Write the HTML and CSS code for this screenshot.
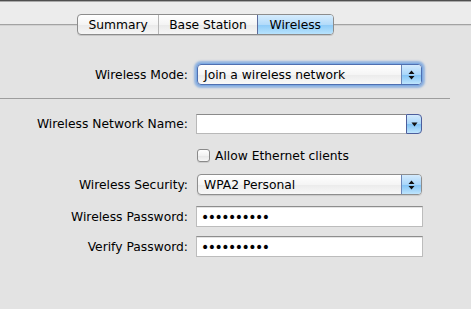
FILE: index.html
```html
<!DOCTYPE html>
<html lang="en">
<head>
    <meta charset="UTF-8">
    <title>Wireless</title>
    <link rel="stylesheet" href="styles.css">
</head>
<body>
    <div class="topbar"></div>
    <div class="pane">
        <div class="tabs">
            <span class="tab">Summary</span>
            <span class="tab">Base Station</span>
            <span class="tab active">Wireless</span>
        </div>

        <div class="row mode-row">
            <label>Wireless Mode:</label>
            <div class="popup focused">
                <span class="popup-text">Join a wireless network</span>
                <span class="cap">
                    <svg width="7" height="10" viewBox="0 0 7 10"><path d="M3.5 0.5 L6.5 4 L0.5 4 Z M0.5 6 L6.5 6 L3.5 9.5 Z" fill="#111"/></svg>
                </span>
            </div>
        </div>

        <div class="sep"></div>

        <div class="row name-row">
            <label for="net-name">Wireless Network Name:</label>
            <div class="combo">
                <input type="text" id="net-name" class="combo-input">
                <span class="combo-btn">
                    <svg width="7" height="5" viewBox="0 0 7 5"><path d="M0.5 0.5 L6.5 0.5 L3.5 4.5 Z" fill="#111"/></svg>
                </span>
            </div>
        </div>

        <div class="row check-row">
            <span></span>
            <label class="check"><span class="box"></span>Allow Ethernet clients</label>
        </div>

        <div class="row sec-row">
            <label>Wireless Security:</label>
            <div class="popup">
                <span class="popup-text">WPA2 Personal</span>
                <span class="cap">
                    <svg width="7" height="10" viewBox="0 0 7 10"><path d="M3.5 0.5 L6.5 4 L0.5 4 Z M0.5 6 L6.5 6 L3.5 9.5 Z" fill="#111"/></svg>
                </span>
            </div>
        </div>

        <div class="row pass-row">
            <label>Wireless Password:</label>
            <div class="field"><span class="dots">••••••••••</span></div>
        </div>

        <div class="row verify-row">
            <label>Verify Password:</label>
            <div class="field"><span class="dots">••••••••••</span></div>
        </div>
    </div>
</body>
</html>
```

FILE: styles.css
```css
html, body {
    margin: 0;
    padding: 0;
    height: 100%;
}

body {
    font-family: "DejaVu Sans", sans-serif;
    font-size: 12.3px;
    color: #000;
    background-color: #e3e3e3;
    overflow: hidden;
}

.topbar {
    height: 23px;
    background-color: #ececec;
    border-top: 1px solid #4f4f4f;
    box-shadow: inset 0 1px 0 #a9a9a9;
}

.pane {
    border-top: 1px solid #a3a3a3;
    box-shadow: inset 0 1px 0 #d2d2d2;
    background-color: #e3e3e3;
    height: 284px;
}

/* segmented tabs */
.tabs {
    display: flex;
    margin-top: -11px;
    margin-left: 77px;
    width: 257px;
    height: 21px;
    box-sizing: border-box;
    border: 1px solid #8c8c8c;
    border-radius: 4px;
    background: linear-gradient(#ffffff, #f4f4f4 50%, #e9e9e9 51%, #f6f6f6);
    box-shadow: 0 1px 0 rgba(0, 0, 0, 0.12);
    overflow: hidden;
}

.tab {
    display: flex;
    align-items: center;
    justify-content: center;
    border-left: 1px solid #b5b5b5;
}

.tab:nth-child(1) { width: 81px; border-left: none; }
.tab:nth-child(2) { width: 98px; }
.tab:nth-child(3) { width: 76px; }

.tab.active {
    border-left: 1px solid #5d6c9c;
    background: linear-gradient(#d6ecfd, #b3dbfa 50%, #8ccaf7 51%, #b8e3fd);
}

/* form rows */
.row {
    display: grid;
    grid-template-columns: 188px 227px;
    column-gap: 8px;
    align-items: center;
}

.row > label {
    text-align: right;
}

.mode-row   { margin-top: 29px; height: 21px; }
.name-row   { margin-top: 15px; height: 20px; }
.check-row  { margin-top: 14px; height: 15px; }
.sec-row    { margin-top: 11px; height: 21px; }
.pass-row   { margin-top: 11px; height: 21px; }
.verify-row { margin-top: 9px;  height: 21px; }

.sep {
    margin-top: 13px;
    width: 450px;
    height: 1px;
    background-color: #9d9d9d;
}

/* popup buttons */
.popup {
    display: flex;
    align-items: center;
    margin-left: 1px;
    width: 225px;
    height: 21px;
    box-sizing: border-box;
    border: 1px solid #8e8e8e;
    border-radius: 4px;
    background: linear-gradient(#ffffff, #f5f5f5 50%, #ebebeb 51%, #f8f8f8);
    box-shadow: 0 1px 1px rgba(0, 0, 0, 0.12);
    overflow: hidden;
}

.popup.focused {
    border-color: #4f6fb0;
    box-shadow: 0 0 0 1px #7eaae2, 0 0 2px 3px rgba(95, 150, 222, 0.6);
}

.popup-text {
    flex: 1;
    padding-left: 6px;
}

.cap {
    display: flex;
    align-items: center;
    justify-content: center;
    width: 19px;
    height: 100%;
    border-left: 1px solid #6c86b8;
    background: linear-gradient(#d3eafd, #a9d6fa 50%, #80c2f5 51%, #bfe5fd);
}

/* combo box */
.combo {
    display: flex;
    width: 226px;
    height: 20px;
}

.combo-input {
    flex: 1;
    min-width: 0;
    margin: 0;
    padding: 0 4px;
    height: 20px;
    box-sizing: border-box;
    border: 1px solid #b8b8b8;
    border-top-color: #8a8a8a;
    border-right: none;
    background-color: #fff;
    font: inherit;
    outline: none;
}

.combo-btn {
    display: flex;
    align-items: center;
    justify-content: center;
    width: 16px;
    height: 20px;
    box-sizing: border-box;
    border: 1px solid #4d5e9c;
    border-radius: 0 4px 4px 0;
    background: linear-gradient(#d3eafd, #a9d6fa 50%, #80c2f5 51%, #bfe5fd);
}

/* checkbox */
.check {
    display: flex;
    align-items: center;
    gap: 5px;
}

.box {
    display: inline-block;
    margin-left: 1px;
    width: 13px;
    height: 13px;
    box-sizing: border-box;
    border: 1px solid #8a8a8a;
    border-radius: 3px;
    background: linear-gradient(#ffffff, #f2f2f2 50%, #e6e6e6 51%, #f7f7f7);
    box-shadow: 0 1px 0 rgba(0, 0, 0, 0.1);
}

/* text fields */
.field {
    display: flex;
    align-items: center;
    height: 21px;
    box-sizing: border-box;
    padding-left: 4px;
    border: 1px solid #bcbcbc;
    border-top-color: #8d8d8d;
    background-color: #fff;
    box-shadow: inset 0 1px 0 #e4e4e4;
}

.dots {
    font-size: 14px;
    letter-spacing: -1.5px;
}
```
